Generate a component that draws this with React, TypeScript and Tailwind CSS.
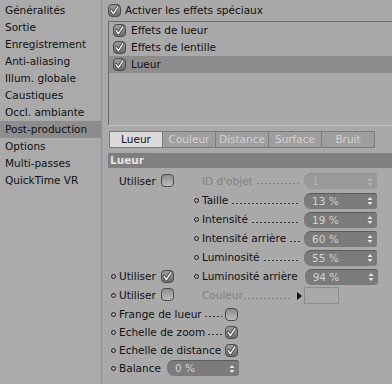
import React from 'react';

const sidebarItems = [
  'Généralités',
  'Sortie',
  'Enregistrement',
  'Anti-aliasing',
  'Illum. globale',
  'Caustiques',
  'Occl. ambiante',
  'Post-production',
  'Options',
  'Multi-passes',
  'QuickTime VR',
];

// dotted leader drawn as a repeating background, so no stray text overlaps
function Dots({ dim, className = '' }: { dim?: boolean; className?: string }) {
  return (
    <span
      className={
        'mb-[-5px] h-[3px] min-w-0 self-center bg-[length:4px_3px] bg-repeat-x ' +
        (dim
          ? 'bg-[radial-gradient(circle,#858585_0.6px,transparent_1.1px)] '
          : 'bg-[radial-gradient(circle,#3c3c3c_0.6px,transparent_1.1px)] ') +
        className
      }
    />
  );
}

function Check({ on }: { on?: boolean }) {
  return (
    <span
      className={
        'inline-flex h-[13px] w-[13px] shrink-0 items-center justify-center rounded-[4px] border border-[#4c4c4c] ' +
        (on ? 'bg-linear-to-b from-[#9c9c9c] to-[#6c6c6c]' : 'bg-linear-to-b from-[#8c8c8c] to-[#bdbdbd]')
      }
    >
      {on && (
        <svg width="11" height="11" viewBox="0 0 11 11">
          <path d="M2.2 5.6 L4.4 8.6 L8.8 1.8" fill="none" stroke="#3a3a3a" strokeWidth="2.8" strokeLinecap="round" strokeLinejoin="round" />
          <path d="M2.2 5.6 L4.4 8.6 L8.8 1.8" fill="none" stroke="#f4f4f4" strokeWidth="1.5" strokeLinecap="round" strokeLinejoin="round" />
        </svg>
      )}
    </span>
  );
}

function Bullet() {
  return <span className="h-[5px] w-[5px] shrink-0 rounded-full border border-[#1e1e1e]" />;
}

function Spinner({ dim }: { dim?: boolean }) {
  const c = dim ? '#b8b8b8' : '#e8e8e8';
  return (
    <svg width="6" height="10" viewBox="0 0 6 10" className="shrink-0">
      <path d="M0.5 4 L3 1 L5.5 4 Z" fill={c} />
      <path d="M0.5 6 L3 9 L5.5 6 Z" fill={c} />
    </svg>
  );
}

function Field({ value, dim, w = 'w-[73px]' }: { value: string; dim?: boolean; w?: string }) {
  return (
    <div
      className={
        'flex h-[16px] shrink-0 items-center justify-between rounded-l-[7px] rounded-r-[3px] border-t pl-[8px] pr-[4px] ' +
        w +
        (dim ? ' border-[#8e8e8e] bg-[#9a9a9a] text-[#b2b2b2]' : ' border-[#5c5c5c] bg-[#7b7b7b] text-[#d2d2d2]')
      }
    >
      <span>{value}</span>
      <Spinner dim={dim} />
    </div>
  );
}

function Leader({ label, value, dim }: { label: string; value: string; dim?: boolean }) {
  return (
    <div className="flex h-full items-center">
      {dim ? <span className="w-[5px] shrink-0" /> : <Bullet />}
      <span className={'ml-[3px] whitespace-nowrap ' + (dim ? 'text-[#828282]' : 'text-[#111]')}>{label}</span>
      <Dots dim={dim} className="ml-[3px] flex-1" />
      <span className="ml-[4px]">
        <Field value={value} dim={dim} />
      </span>
    </div>
  );
}

function LeftUse({ on, bullet }: { on?: boolean; bullet?: boolean }) {
  return (
    <div className="flex h-full items-center pl-[3px]">
      {bullet ? <Bullet /> : <span className="w-[5px]" />}
      <span className="ml-[3px] text-[#111]">Utiliser</span>
      <span className="ml-[5px]">
        <Check on={on} />
      </span>
    </div>
  );
}

function CheckRow({ label, on }: { label: string; on?: boolean }) {
  return (
    <div className="flex h-[18px] items-center pl-[3px]">
      <Bullet />
      <span className="ml-[3px] flex w-[106px] items-center whitespace-nowrap text-[#111]">
        {label}
        <Dots className="ml-[2px] mr-[3px] flex-1" />
      </span>
      <Check on={on} />
    </div>
  );
}

export default function App() {
  return (
    <div
      className="flex h-[384px] w-[392px] overflow-hidden bg-[#a9a9a9] text-[10.5px] leading-none text-[#111]"
      style={{ fontFamily: '"DejaVu Sans", sans-serif' }}
    >
      {/* left list of settings pages */}
      <div className="w-[102px] shrink-0 border-r border-[#8f8f8f] bg-[#aaaaaa] pt-[2px]">
        {sidebarItems.map((item) => (
          <div
            key={item}
            className={'flex h-[17px] items-center pl-[5px] ' + (item === 'Post-production' ? 'bg-[#8d8d8d]' : '')}
          >
            {item}
          </div>
        ))}
      </div>

      {/* main panel */}
      <div className="min-w-0 flex-1 pl-[6px]">
        <div className="flex h-[21px] items-center">
          <Check on />
          <span className="ml-[4px]">Activer les effets spéciaux</span>
        </div>

        <div className="h-[104px] border-t border-l border-[#6c6c6c]">
          {['Effets de lueur', 'Effets de lentille', 'Lueur'].map((e) => (
            <div key={e} className={'flex h-[17px] items-center pl-[4px] ' + (e === 'Lueur' ? 'bg-[#8d8d8d]' : '')}>
              <Check on />
              <span className="ml-[5px]">{e}</span>
            </div>
          ))}
        </div>
        <div className="h-px bg-[#c2c2c2]" />

        <div className="mt-[5px] ml-px flex h-[17px] w-[270px]">
          {['Lueur', 'Couleur', 'Distance', 'Surface', 'Bruit'].map((t, i) => (
            <div
              key={t}
              className={
                'flex w-[54px] items-center justify-center border border-[#7c7c7c] ' +
                (i > 0 ? '-ml-px ' : '') +
                (i === 0 ? 'bg-[#dadada] text-[#111]' : 'bg-[#9e9e9e] text-[#d3d3d3]')
              }
            >
              {t}
            </div>
          ))}
        </div>

        <div className="mt-[5px] flex h-[15px] items-center bg-[#7f7f7f] pl-[2px] font-bold text-[#e4e4e4]">Lueur</div>

        {/* parameters */}
        <div className="mt-[3px] grid grid-cols-[86px_183px]">
          <div className="h-[20px]">
            <LeftUse />
          </div>
          <div className="h-[20px]">
            <Leader label="ID d'objet" value="1" dim />
          </div>

          <div className="h-[19px]" />
          <div className="h-[19px]">
            <Leader label="Taille" value="13 %" />
          </div>
          <div className="h-[19px]" />
          <div className="h-[19px]">
            <Leader label="Intensité" value="19 %" />
          </div>
          <div className="h-[19px]" />
          <div className="h-[19px]">
            <Leader label="Intensité arrière" value="60 %" />
          </div>
          <div className="h-[19px]" />
          <div className="h-[19px]">
            <Leader label="Luminosité" value="55 %" />
          </div>
          <div className="h-[19px]">
            <LeftUse on bullet />
          </div>
          <div className="h-[19px]">
            <Leader label="Luminosité arrière" value="94 %" />
          </div>

          <div className="h-[19px]">
            <LeftUse bullet />
          </div>
          <div className="flex h-[19px] w-[145px] items-center">
            <span className="w-[5px] shrink-0" />
            <span className="ml-[3px] text-[#828282]">Couleur</span>
            <Dots dim className="flex-1" />
            <svg width="5" height="8" viewBox="0 0 5 8" className="ml-[5px] shrink-0">
              <path d="M0 0 L5 4 L0 8 Z" fill="#111" />
            </svg>
            <span className="ml-[2px] h-[17px] w-[35px] shrink-0 border border-[#8e8e8e] bg-[#a9a9a9]" />
          </div>
        </div>

        <div>
          <CheckRow label="Frange de lueur" />
          <CheckRow label="Echelle de zoom" on />
          <CheckRow label="Echelle de distance" on />
          <div className="flex h-[18px] items-center pl-[3px]">
            <Bullet />
            <span className="ml-[3px]">Balance</span>
            <span className="ml-[6px]">
              <Field value="0 %" w="w-[72px]" />
            </span>
          </div>
        </div>
      </div>
    </div>
  );
}
